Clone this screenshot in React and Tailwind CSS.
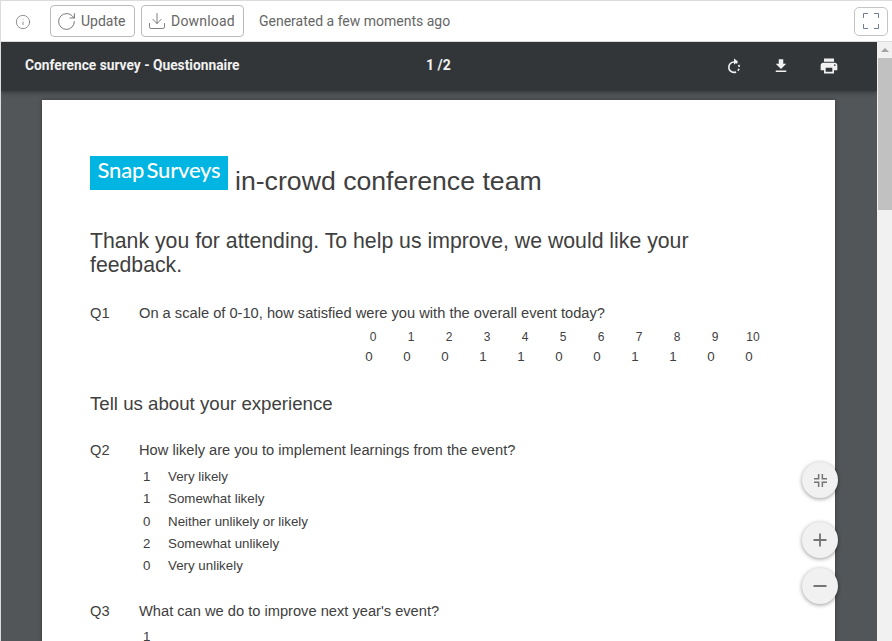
import { Info, RotateCw, Download, Plus, Minus } from 'lucide-react';

const SCALE = ['0', '1', '2', '3', '4', '5', '6', '7', '8', '9', '10'];
const COUNTS = [0, 0, 0, 1, 1, 0, 0, 1, 1, 0, 0];
const Q2 = [
  [1, 'Very likely'],
  [1, 'Somewhat likely'],
  [0, 'Neither unlikely or likely'],
  [2, 'Somewhat unlikely'],
  [0, 'Very unlikely'],
];

function Question({ num, text }) {
  return (
    <div className="flex text-[14.67px] leading-[18px]">
      <span className="w-[49px] shrink-0">{num}</span>
      <span>{text}</span>
    </div>
  );
}

function FabButton({ children, className }) {
  return (
    <div className={`absolute left-[801px] flex h-9 w-9 items-center justify-center rounded-full bg-[#f1f1f1] text-[#757575] shadow-[0_1px_4px_rgba(0,0,0,0.4)] ${className}`}>
      {children}
    </div>
  );
}

export default function App() {
  return (
    <div className="relative flex h-[641px] w-[892px] flex-col overflow-hidden border-l border-[#dcdcdc] bg-white font-['Roboto',sans-serif]">
      {/* toolbar */}
      <div className="flex h-[42px] shrink-0 items-center border-y border-[#dcdcdc] bg-white pl-[14px] pr-[4px] text-[#666]">
        <Info size={16} strokeWidth={1.2} className="mt-px text-[#777]" />
        <button className="ml-[19px] flex h-[32px] w-[85px] items-center rounded border border-[#bbb] pl-[5px] text-[14px]">
          <RotateCw size={21} strokeWidth={0.9} className="mr-[4px] text-[#555]" />
          Update
        </button>
        <button className="ml-[6px] flex h-[32px] w-[103px] items-center rounded border border-[#bbb] pl-[5px] text-[14px] tracking-[0.2px]">
          <Download size={20} strokeWidth={0.9} className="mr-[4px] text-[#555]" />
          Download
        </button>
        <span className="ml-[15px] mt-px text-[14px]">Generated a few moments ago</span>
        <button className="ml-auto flex h-[29px] w-[34px] items-center justify-center rounded-[5px] border border-[#c4c4c4]">
          <svg width="16" height="16" viewBox="0 0 16 16" fill="none" stroke="#6f7f96" strokeWidth="1">
            <path d="M.5 5V.5H5M11 .5h4.5V5M15.5 11v4.5H11M5 15.5H.5V11" />
          </svg>
        </button>
      </div>

      <div className="flex min-h-0 flex-1">
        {/* pdf viewer */}
        <div className="flex min-w-0 flex-1 flex-col overflow-hidden bg-[#525659]">
          <div className="relative flex h-[49px] shrink-0 items-center bg-[#323639] pb-[2px] pl-[24px] pr-[38px] text-white shadow-[0_2px_4px_rgba(0,0,0,0.3)]">
            <span className="w-[401px] text-[13.75px] font-bold text-[#f1f1f1]">Conference survey - Questionnaire</span>
            <span className="text-[14px] font-bold text-[#f1f1f1]">1 /2</span>
            <div className="ml-auto flex items-center gap-[31px]">
              <svg width="14" height="16" viewBox="0 0 14 16" fill="none" stroke="#f1f1f1" strokeWidth="1.6">
                <path d="M7 4a5.2 5.2 0 0 0 0 10.4" />
                <path d="M7 14.4A5.2 5.2 0 0 0 7 4" strokeDasharray="2.2 1.9" />
                <path d="M7 0.6 11 3.6 7 6.6z" fill="#f1f1f1" stroke="none" />
              </svg>
              <svg width="18" height="18" viewBox="0 0 24 24" fill="#f1f1f1">
                <path d="M19 9h-4V3H9v6H5l7 7 7-7zM5 18v2h14v-2H5z" />
              </svg>
              <svg width="20" height="20" viewBox="0 0 24 24" fill="#f1f1f1" className="-ml-[2px]">
                <path d="M19 8H5c-1.66 0-3 1.34-3 3v6h4v4h12v-4h4v-6c0-1.66-1.34-3-3-3zm-3 11H8v-5h8v5zm3-7c-.55 0-1-.45-1-1s.45-1 1-1 1 .45 1 1-.45 1-1 1zm-1-9H6v4h12V3z" />
              </svg>
            </div>
          </div>

          {/* page */}
          <div className="ml-[41px] mt-[9px] h-[600px] w-[793px] shrink-0 bg-white pl-[48px] pt-[56px] font-['Liberation_Sans',Arial,sans-serif] text-[#404040] shadow-[0_0_4px_rgba(0,0,0,0.3)]">
            <div className="flex items-end">
              <div className="flex h-[34px] w-[138px] items-start justify-center bg-[#00b5e2] pt-[1px] font-['Lato',sans-serif] text-[22px] font-medium leading-[26px] tracking-[-0.2px] text-white [word-spacing:-3px]">
                Snap Surveys
              </div>
              <span className="ml-[7px] -mb-[6px] text-[26.67px] leading-[30px]">in-crowd conference team</span>
            </div>
            <p className="mt-[39px] w-[640px] text-[21.26px] leading-[24px]">
              Thank you for attending. To help us improve, we would like your feedback.
            </p>
            <div className="mt-[27px]">
              <Question num="Q1" text="On a scale of 0-10, how satisfied were you with the overall event today?" />
            </div>
            <div className="ml-[264px] mt-[8px] grid w-[418px] grid-cols-11 text-center text-[12px] leading-[14px]">
              {SCALE.map((s) => (
                <span key={s}>{s}</span>
              ))}
            </div>
            <div className="ml-[260px] mt-[5px] grid w-[418px] grid-cols-11 text-center text-[13.33px] leading-[15px]">
              {COUNTS.map((c, i) => (
                <span key={i}>{c}</span>
              ))}
            </div>
            <h2 className="mt-[29px] text-[18.67px] leading-[22px]">Tell us about your experience</h2>
            <div className="mt-[26px]">
              <Question num="Q2" text="How likely are you to implement learnings from the event?" />
            </div>
            <div className="mt-[9px] flex flex-col gap-[5.3px] text-[13.33px] leading-[17px]">
              {Q2.map(([n, label]) => (
                <div key={label} className="flex">
                  <span className="ml-[53px] w-[25px]">{n}</span>
                  <span>{label}</span>
                </div>
              ))}
            </div>
            <div className="mt-[28px]">
              <Question num="Q3" text="What can we do to improve next year's event?" />
            </div>
            <div className="ml-[53px] mt-[8px] text-[13.33px] leading-[17px]">1</div>
          </div>
        </div>

        {/* scrollbar */}
        <div className="flex w-[15px] shrink-0 flex-col bg-[#f1f1f1]">
          <div className="flex h-[16px] items-center justify-center">
            <div className="h-0 w-0 border-x-[4px] border-b-[4px] border-x-transparent border-b-[#a3a3a3]" />
          </div>
          <div className="ml-[1px] h-[152px] bg-[#c1c1c1]" />
        </div>
      </div>

      {/* floating zoom controls */}
      <FabButton className="top-[462px]">
        <svg width="13" height="13" viewBox="0 0 14 14" fill="none" stroke="#757575" strokeWidth="1.6">
          <path d="M5 0v5H0M9 0v5h5M5 14V9H0M9 14V9h5" />
        </svg>
      </FabButton>
      <FabButton className="top-[522px]">
        <Plus size={20} strokeWidth={2.2} />
      </FabButton>
      <FabButton className="top-[568px]">
        <Minus size={20} strokeWidth={2.2} />
      </FabButton>
    </div>
  );
}
